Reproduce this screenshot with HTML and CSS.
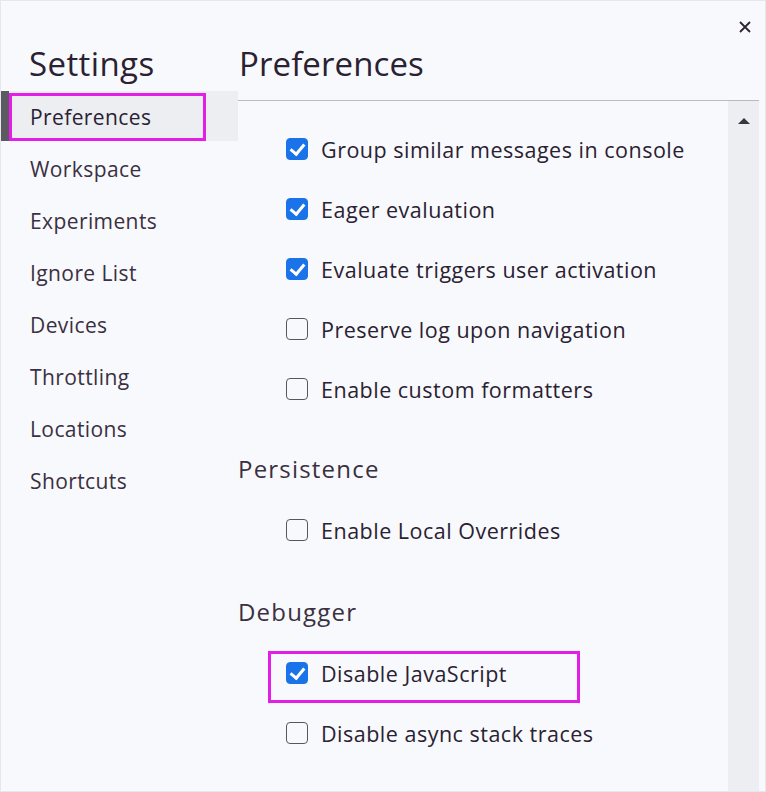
FILE: index.html
```html
<!DOCTYPE html>
<html>
<head>
<meta charset="utf-8">
<link rel="stylesheet" href="styles.css">
</head>
<body>
<div class="frame">
  <button class="close" aria-label="Close">
    <svg width="14" height="14" viewBox="0 0 14 14"><path d="M2 2 L12 12 M12 2 L2 12" stroke="#2b2530" stroke-width="1.8" fill="none"/></svg>
  </button>
  <aside class="sidebar">
    <h1 class="title">Settings</h1>
    <nav class="nav">
      <div class="nav-item selected"><span class="hl">Preferences</span></div>
      <div class="nav-item">Workspace</div>
      <div class="nav-item">Experiments</div>
      <div class="nav-item">Ignore List</div>
      <div class="nav-item">Devices</div>
      <div class="nav-item">Throttling</div>
      <div class="nav-item">Locations</div>
      <div class="nav-item">Shortcuts</div>
    </nav>
  </aside>
  <main class="main">
    <h2 class="title">Preferences</h2>
    <div class="panel">
      <div class="scroll">
        <div class="rows">
          <label class="row"><span class="cb on"></span>Group similar messages in console</label>
          <label class="row"><span class="cb on"></span>Eager evaluation</label>
          <label class="row"><span class="cb on"></span>Evaluate triggers user activation</label>
          <label class="row"><span class="cb"></span>Preserve log upon navigation</label>
          <label class="row"><span class="cb"></span>Enable custom formatters</label>
        </div>
        <h3 class="section">Persistence</h3>
        <div class="rows">
          <label class="row"><span class="cb"></span>Enable Local Overrides</label>
        </div>
        <h3 class="section debugger">Debugger</h3>
        <div class="rows">
          <label class="row hlrow"><span class="cb on"></span>Disable JavaScript</label>
          <label class="row"><span class="cb"></span>Disable async stack traces</label>
        </div>
      </div>
      <div class="scrollbar">
        <svg width="14" height="8" viewBox="0 0 14 8"><path d="M7 1 L13 7 L1 7 Z" fill="#3a3340"/></svg>
      </div>
    </div>
  </main>
</div>
</body>
</html>
```
FILE: styles.css
```css
* { box-sizing: border-box; }
html, body { margin: 0; padding: 0; }
body {
  background: #f8f9fc;
  font-family: "Open Sans", "Noto Sans", sans-serif;
  color: #2a2132;
  width: 766px;
  height: 792px;
  overflow: hidden;
}
.frame {
  position: relative;
  display: flex;
  height: 792px;
  border: 1px solid #e6e7ec;
}
.close {
  position: absolute;
  right: 13px;
  top: 19px;
  border: 0;
  background: none;
  padding: 0;
  width: 14px;
  height: 14px;
  display: flex;
}
.sidebar {
  width: 237px;
  flex: none;
  padding-top: 36px;
}
.title {
  margin: 0;
  font-weight: 400;
  font-size: 33px;
  letter-spacing: 0.4px;
  line-height: 54px;
  color: #2a2132;
  padding-left: 28px;
}
.main .title { padding-left: 1px; letter-spacing: 0.1px; }
.nav { display: flex; flex-direction: column; }
.nav-item {
  height: 52px;
  display: flex;
  align-items: center;
  padding-left: 29px;
  font-size: 21px;
  letter-spacing: 0.4px;
  color: #3a3042;
}
.nav-item.selected {
  background: #eceef2;
  border-left: 8px solid #5c5a60;
  padding-left: 0;
  height: 50px;
  margin-bottom: 2px;
}
.hl {
  display: flex;
  align-items: center;
  height: 48px;
  width: 197px;
  padding-left: 18px;
  border: 3px solid #e31ee6;
  margin-top: 1px;
  color: #2a2132;
}
.main {
  flex: 1;
  display: flex;
  flex-direction: column;
  padding-top: 36px;
}
.panel {
  flex: 1;
  display: flex;
  border-top: 1.5px solid #b9bbc2;
  margin-top: 9px;
  margin-right: 6px;
}
.scroll { flex: 1; padding-top: 18px; }
.scrollbar {
  width: 31px;
  background: #eceef2;
  display: flex;
  justify-content: center;
  padding-top: 16px;
}
.rows { display: flex; flex-direction: column; padding-left: 48px; }
.row {
  height: 60px;
  display: flex;
  align-items: center;
  font-size: 21.5px;
  letter-spacing: 0.5px;
  color: #2a2132;
  width: fit-content;
}
.cb {
  width: 22px;
  height: 22px;
  border: 1.6px solid #5b5560;
  border-radius: 4px;
  margin-right: 13px;
  flex: none;
  position: relative;
}
.cb.on {
  background: #1a73e8;
  border-color: #1a73e8;
}
.cb.on::after {
  content: "";
  position: absolute;
  left: 6px;
  top: 2px;
  width: 6px;
  height: 11px;
  border: solid #fff;
  border-width: 0 3px 3px 0;
  transform: rotate(40deg);
}
.section {
  margin: 0;
  font-weight: 400;
  font-size: 24px;
  letter-spacing: 1.2px;
  color: #3a3042;
  line-height: 30px;
  padding-top: 35px;
  padding-bottom: 16px;
}
.section.debugger { padding-top: 37px; padding-bottom: 24px; }
.hlrow {
  border: 3px solid #e31ee6;
  height: 52px;
  padding-bottom: 8px;
  margin-left: -18px;
  padding-left: 15px;
  width: 312px;
}
```
